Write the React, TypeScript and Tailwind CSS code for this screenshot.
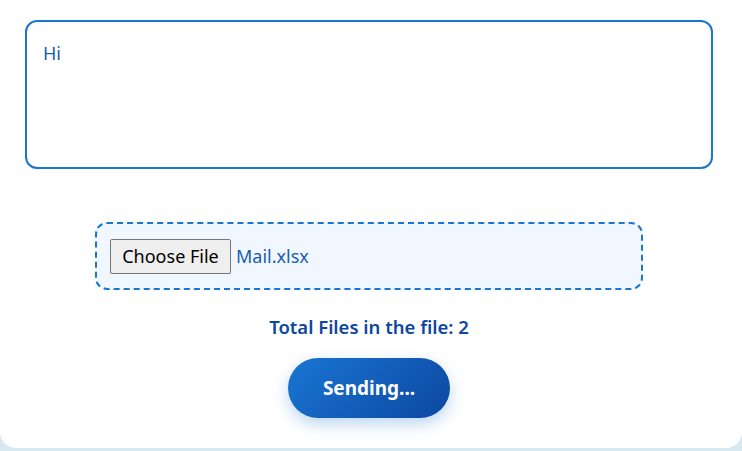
import { useState } from 'react'

export default function App() {
  const [message, setMessage] = useState('Hi')
  const fileName = 'Mail.xlsx'
  const totalFiles = 2

  return (
    <div className="min-h-[451px] bg-[#d8e8f1] font-['Noto_Sans','Open_Sans',sans-serif]">
      <div className="bg-white rounded-b-[16px] h-[448px] pl-[25px] pr-[29px] pt-[20px]">
        {/* Message box */}
        <textarea
          value={message}
          onChange={e => setMessage(e.target.value)}
          className="block w-full h-[149px] resize-none border-2 border-[#1976d2] rounded-[12px] px-4 pt-[18px] text-[18px] leading-[26px] text-[#1a5cb0] outline-none"
        />

        {/* File picker */}
        <label className="mt-[53px] mx-auto w-[548px] h-[68px] flex items-center gap-[5px] pl-[13px] border-2 border-dashed border-[#1976d2] rounded-[12px] bg-[#f0f7fe] cursor-pointer">
          <input type="file" className="hidden" />
          <span className="h-[35px] w-[121px] flex items-center justify-center bg-[#efefef] border border-[#767676] rounded-[2px] text-[18px] text-black">
            Choose File
          </span>
          <span className="text-[18px] text-[#1a5cb0]">{fileName}</span>
        </label>

        <p className="mt-[23px] text-center text-[18.5px] leading-[27px] font-semibold text-[#0d47a1]">
          Total Files in the file: {totalFiles}
        </p>

        <button
          type="button"
          className="mt-[18px] mx-auto flex items-center justify-center w-[162px] h-[60px] rounded-full bg-[linear-gradient(135deg,#1976d2,#0d47a1)] text-white text-[19px] font-bold shadow-[0_6px_16px_rgba(25,118,210,0.3)]"
        >
          Sending...
        </button>
      </div>
    </div>
  )
}
